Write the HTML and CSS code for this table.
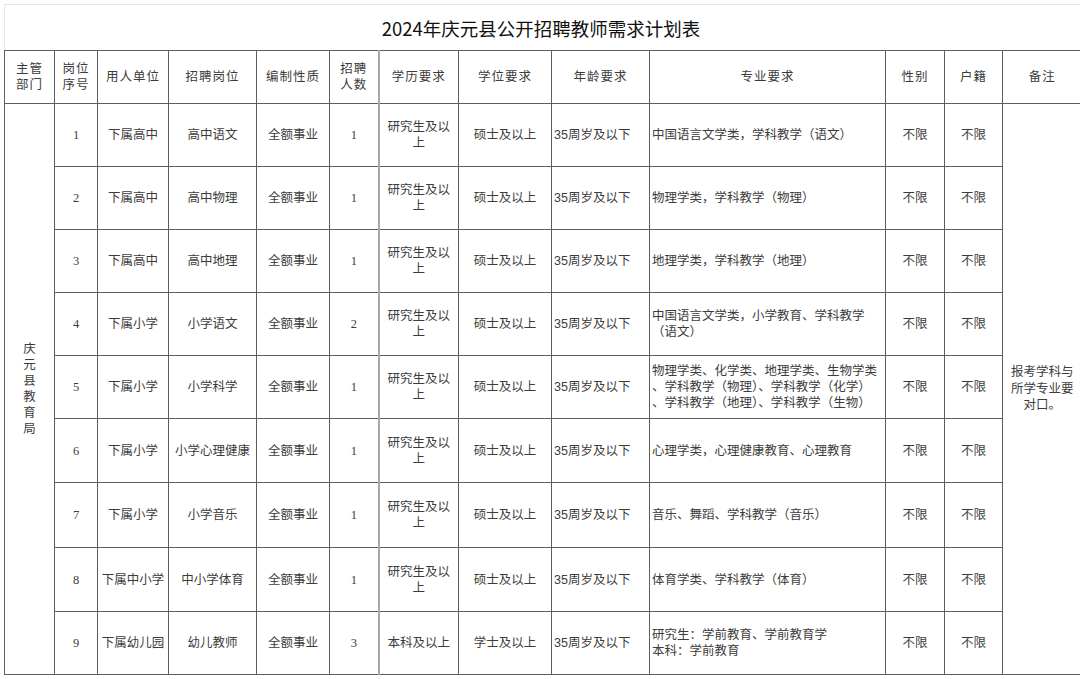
FILE: index.html
```html
<!DOCTYPE html>
<html lang="zh-CN">
<head>
<meta charset="utf-8">
<title>2024年庆元县公开招聘教师需求计划表</title>
<link rel="stylesheet" href="styles.css">
</head>
<body>
<div class="sheet">
  <div class="title">2024年庆元县公开招聘教师需求计划表</div>
  <table class="plan">
    <colgroup>
      <col class="c-dept"><col class="c-no"><col class="c-unit"><col class="c-post"><col class="c-type"><col class="c-num"><col class="c-edu"><col class="c-deg"><col class="c-age"><col class="c-major"><col class="c-sex"><col class="c-huji"><col class="c-note">
    </colgroup>
    <thead>
      <tr>
        <th><span class="line">主管</span><span class="line">部门</span></th>
        <th><span class="line">岗位</span><span class="line">序号</span></th>
        <th>用人单位</th>
        <th>招聘岗位</th>
        <th>编制性质</th>
        <th><span class="line">招聘</span><span class="line">人数</span></th>
        <th class="split">学历要求</th>
        <th>学位要求</th>
        <th>年龄要求</th>
        <th>专业要求</th>
        <th>性别</th>
        <th>户籍</th>
        <th class="last">备注</th>
      </tr>
    </thead>
    <tbody>
      <tr>
        <td rowspan="9" class="dept"><span class="vert">庆元县教育局</span></td>
        <td class="num">1</td><td class="unit">下属高中</td><td>高中语文</td><td>全额事业</td><td class="num">1</td>
        <td class="split edu">研究生及以上</td><td>硕士及以上</td><td class="age">35周岁及以下</td>
        <td class="major">中国语言文学类，学科教学（语文）</td><td>不限</td><td>不限</td>
        <td rowspan="9" class="note last"><span class="note-text">报考学科与所学专业要对口。</span></td>
      </tr>
      <tr>
        <td class="num">2</td><td class="unit">下属高中</td><td>高中物理</td><td>全额事业</td><td class="num">1</td>
        <td class="split edu">研究生及以上</td><td>硕士及以上</td><td class="age">35周岁及以下</td>
        <td class="major">物理学类，学科教学（物理）</td><td>不限</td><td>不限</td>
      </tr>
      <tr>
        <td class="num">3</td><td class="unit">下属高中</td><td>高中地理</td><td>全额事业</td><td class="num">1</td>
        <td class="split edu">研究生及以上</td><td>硕士及以上</td><td class="age">35周岁及以下</td>
        <td class="major">地理学类，学科教学（地理）</td><td>不限</td><td>不限</td>
      </tr>
      <tr>
        <td class="num">4</td><td class="unit">下属小学</td><td>小学语文</td><td>全额事业</td><td class="num">2</td>
        <td class="split edu">研究生及以上</td><td>硕士及以上</td><td class="age">35周岁及以下</td>
        <td class="major"><span class="line">中国语言文学类，小学教育、学科教学</span><span class="line">（语文）</span></td><td>不限</td><td>不限</td>
      </tr>
      <tr>
        <td class="num">5</td><td class="unit">下属小学</td><td>小学科学</td><td>全额事业</td><td class="num">1</td>
        <td class="split edu">研究生及以上</td><td>硕士及以上</td><td class="age">35周岁及以下</td>
        <td class="major"><span class="line">物理学类、化学类、地理学类、生物学类</span><span class="line">、学科教学（物理）、学科教学（化学）</span><span class="line">、学科教学（地理）、学科教学（生物）</span></td><td>不限</td><td>不限</td>
      </tr>
      <tr class="tall">
        <td class="num">6</td><td class="unit">下属小学</td><td>小学心理健康</td><td>全额事业</td><td class="num">1</td>
        <td class="split edu">研究生及以上</td><td>硕士及以上</td><td class="age">35周岁及以下</td>
        <td class="major">心理学类，心理健康教育、心理教育</td><td>不限</td><td>不限</td>
      </tr>
      <tr class="taller">
        <td class="num">7</td><td class="unit">下属小学</td><td>小学音乐</td><td>全额事业</td><td class="num">1</td>
        <td class="split edu">研究生及以上</td><td>硕士及以上</td><td class="age">35周岁及以下</td>
        <td class="major">音乐、舞蹈、学科教学（音乐）</td><td>不限</td><td>不限</td>
      </tr>
      <tr class="tall">
        <td class="num">8</td><td class="unit">下属中小学</td><td>中小学体育</td><td>全额事业</td><td class="num">1</td>
        <td class="split edu">研究生及以上</td><td>硕士及以上</td><td class="age">35周岁及以下</td>
        <td class="major">体育学类、学科教学（体育）</td><td>不限</td><td>不限</td>
      </tr>
      <tr>
        <td class="num">9</td><td class="unit">下属幼儿园</td><td>幼儿教师</td><td>全额事业</td><td class="num">3</td>
        <td class="split">本科及以上</td><td>学士及以上</td><td class="age">35周岁及以下</td>
        <td class="major"><span class="line">研究生：学前教育、学前教育学</span><span class="line">本科：学前教育</span></td><td>不限</td><td>不限</td>
      </tr>
    </tbody>
  </table>
</div>
</body>
</html>
```
FILE: styles.css
```css
html, body {
  margin: 0;
  padding: 0;
  background: #ffffff;
}

.sheet {
  padding: 4px 0 0 4px;
  width: 1077px;
}

.title {
  box-sizing: border-box;
  height: 46px;
  border-top: 1px solid #e6e6e6;
  border-left: 1px solid #e6e6e6;
  display: flex;
  align-items: center;
  justify-content: center;
  padding-right: 4px;
  font-family: "Noto Sans CJK SC", "Noto Sans", sans-serif;
  font-size: 18.5px;
  color: #111111;
}

.plan {
  width: 1077px;
  border-collapse: collapse;
  table-layout: fixed;
  font-family: "Liberation Serif", "Noto Sans CJK SC", serif;
  font-size: 12.5px;
  color: #3c3c3c;
}

.c-dept { width: 50px; }
.c-no { width: 43px; }
.c-unit { width: 71px; }
.c-post { width: 88px; }
.c-type { width: 73px; }
.c-num { width: 49px; }
.c-edu { width: 80px; }
.c-deg { width: 93px; }
.c-age { width: 98px; }
.c-major { width: 236px; }
.c-sex { width: 59px; }
.c-huji { width: 58px; }
.c-note { width: 79px; }

.plan th,
.plan td {
  border: 1px solid #5e5e5e;
  text-align: center;
  vertical-align: middle;
  padding: 0 3px;
  line-height: 16px;
  font-weight: normal;
}

.plan th {
  height: 52px;
  letter-spacing: 1px;
}

.plan td {
  height: 62px;
}

.plan tr.tall td {
  height: 63px;
}

.plan tr.taller td {
  height: 64px;
}

.plan .split {
  border-left: 2px solid #a8a8a8;
}

.plan .last {
  border-right: none;
}

.plan td.unit {
  padding: 0 1px;
  white-space: nowrap;
}

.plan td.edu {
  padding: 0 6px;
}

.plan td.age {
  text-align: left;
  padding: 0 2px;
  font-family: "Liberation Sans", "Noto Sans CJK SC", sans-serif;
}

.plan td.major {
  text-align: left;
  padding: 0 2px;
  white-space: nowrap;
}

.line {
  display: block;
}

.vert {
  display: inline-block;
  width: 1em;
  word-break: break-all;
  line-height: 16px;
}

.plan td.note {
  padding: 0 7px;
}

.note-text {
  display: block;
  line-height: 16.5px;
}
```
